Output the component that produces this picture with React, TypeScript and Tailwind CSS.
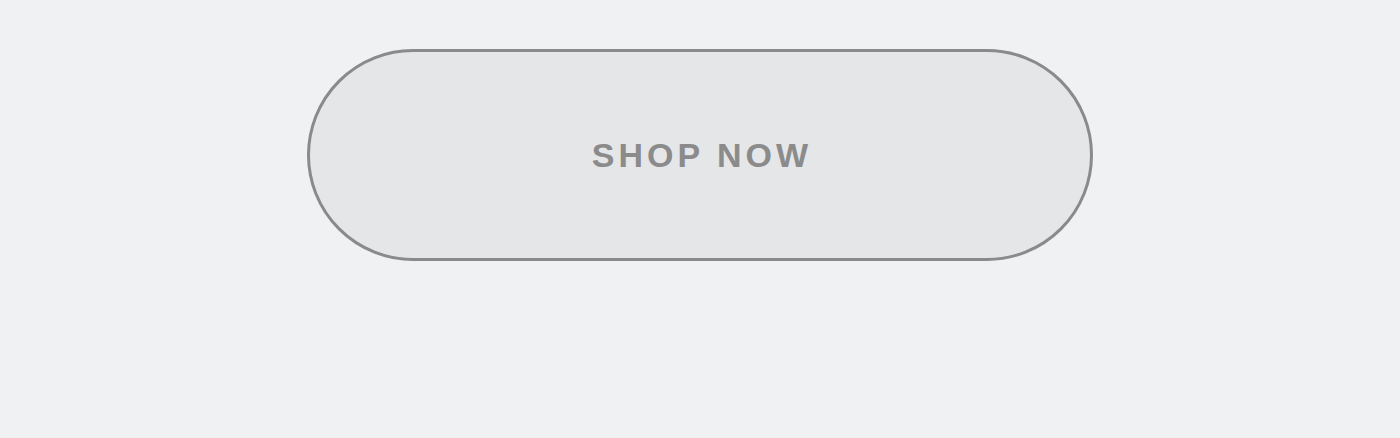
export default function App() {
  return (
    <div className="flex h-[438px] w-full justify-center bg-[#f0f1f3] pt-[49px] font-['Liberation_Sans',Arial,sans-serif]">
      <button
        type="button"
        className="flex h-[212px] w-[786px] items-center justify-center rounded-full border-[3px] border-[#8a8a8a] bg-[#e5e6e8]"
      >
        <span className="pl-[4px] text-[34px] font-bold leading-none tracking-[4px] text-[#8b8b8b]">
          SHOP NOW
        </span>
      </button>
    </div>
  );
}
